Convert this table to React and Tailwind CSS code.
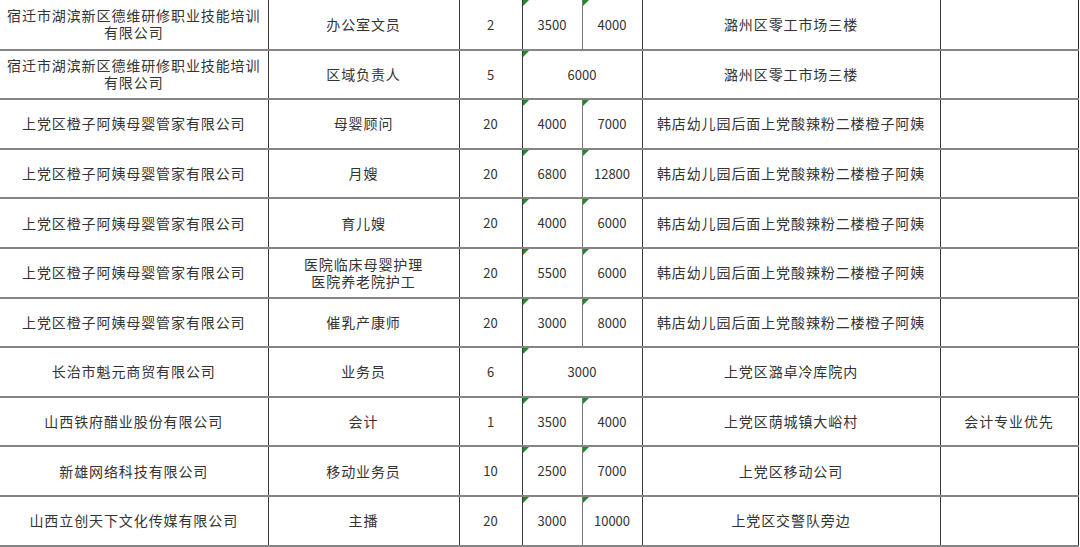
const rows = [
    { company: ['宿迁市湖滨新区德维研修职业技能培训', '有限公司'], job: ['办公室文员'], num: '2', min: '3500', max: '4000', addr: '潞州区零工市场三楼', note: '' },
    { company: ['宿迁市湖滨新区德维研修职业技能培训', '有限公司'], job: ['区域负责人'], num: '5', salary: '6000', addr: '潞州区零工市场三楼', note: '' },
    { company: ['上党区橙子阿姨母婴管家有限公司'], job: ['母婴顾问'], num: '20', min: '4000', max: '7000', addr: '韩店幼儿园后面上党酸辣粉二楼橙子阿姨', note: '' },
    { company: ['上党区橙子阿姨母婴管家有限公司'], job: ['月嫂'], num: '20', min: '6800', max: '12800', addr: '韩店幼儿园后面上党酸辣粉二楼橙子阿姨', note: '' },
    { company: ['上党区橙子阿姨母婴管家有限公司'], job: ['育儿嫂'], num: '20', min: '4000', max: '6000', addr: '韩店幼儿园后面上党酸辣粉二楼橙子阿姨', note: '' },
    { company: ['上党区橙子阿姨母婴管家有限公司'], job: ['医院临床母婴护理', '医院养老院护工'], num: '20', min: '5500', max: '6000', addr: '韩店幼儿园后面上党酸辣粉二楼橙子阿姨', note: '' },
    { company: ['上党区橙子阿姨母婴管家有限公司'], job: ['催乳产康师'], num: '20', min: '3000', max: '8000', addr: '韩店幼儿园后面上党酸辣粉二楼橙子阿姨', note: '' },
    { company: ['长治市魁元商贸有限公司'], job: ['业务员'], num: '6', salary: '3000', addr: '上党区潞卓冷库院内', note: '' },
    { company: ['山西铁府醋业股份有限公司'], job: ['会计'], num: '1', min: '3500', max: '4000', addr: '上党区荫城镇大峪村', note: '会计专业优先' },
    { company: ['新雄网络科技有限公司'], job: ['移动业务员'], num: '10', min: '2500', max: '7000', addr: '上党区移动公司', note: '' },
    { company: ['山西立创天下文化传媒有限公司'], job: ['主播'], num: '20', min: '3000', max: '10000', addr: '上党区交警队旁边', note: '' },
];

function Flag() {
    return (
        <span className="absolute left-0 top-0 h-0 w-0 border-t-[6px] border-r-[6px] border-t-[#1e8a2e] border-r-transparent" />
    );
}

function Lines({ items }) {
    return items.map((t, i) => (
        <div key={i} className="leading-[17px]">
            {t}
        </div>
    ));
}

const cell = 'border-b-2 border-b-[#858585] border-r border-r-[#3a3a3a] text-center align-middle p-0';
const cjk = 'text-[14px] tracking-[0.9px]';
const num = 'text-[13px]';

export default function App() {
    return (
        <div className="w-[1080px] h-[547px] overflow-hidden bg-white">
            <table
                className="table-fixed border-collapse w-[1078px] text-[#333]"
                style={{ fontFamily: '"Noto Sans CJK SC", "Noto Sans", sans-serif' }}
            >
                <colgroup>
                    <col className="w-[268px]" />
                    <col className="w-[191px]" />
                    <col className="w-[63px]" />
                    <col className="w-[60px]" />
                    <col className="w-[60px]" />
                    <col className="w-[298px]" />
                    <col className="w-[138px]" />
                </colgroup>
                <tbody>
                    {rows.map((r, i) => (
                        <tr key={i} className="h-[49.6px]">
                            <td className={`${cell} ${cjk} px-1`}>
                                <Lines items={r.company} />
                            </td>
                            <td className={`${cell} ${cjk}`}>
                                <Lines items={r.job} />
                            </td>
                            <td className={`${cell} ${num}`}>{r.num}</td>
                            {r.salary ? (
                                <td colSpan={2} className={`${cell} ${num} relative`}>
                                    <Flag />
                                    {r.salary}
                                </td>
                            ) : (
                                <>
                                    <td className={`${cell} ${num} relative border-r-[#777]`}>
                                        <Flag />
                                        {r.min}
                                    </td>
                                    <td className={`${cell} ${num} relative`}>
                                        <Flag />
                                        {r.max}
                                    </td>
                                </>
                            )}
                            <td className={`${cell} ${cjk}`}>{r.addr}</td>
                            <td className={`${cell} ${cjk} border-r-[#222]`}>{r.note}</td>
                        </tr>
                    ))}
                </tbody>
            </table>
        </div>
    );
}
